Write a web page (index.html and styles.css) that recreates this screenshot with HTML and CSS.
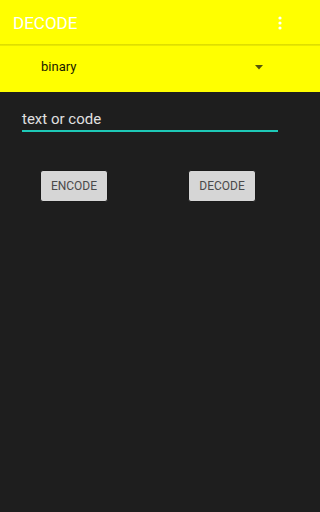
FILE: index.html
```html
<!DOCTYPE html>
<html>
<head>
<meta charset="utf-8">
<link rel="stylesheet" href="styles.css">
</head>
<body>
<div class="appbar">
  <div class="bar-inner">
    <div class="title">DECODE</div>
    <svg class="menu" width="4" height="14" viewBox="0 0 4 14">
      <circle cx="2" cy="2" r="1.6" fill="#fff"/>
      <circle cx="2" cy="7" r="1.6" fill="#fff"/>
      <circle cx="2" cy="12" r="1.6" fill="#fff"/>
    </svg>
  </div>
</div>
<div class="shadow"></div>
<div class="spinner">
  <div class="spinner-inner">
    <span class="spinner-text">binary</span>
    <svg class="caret" width="8" height="5" viewBox="0 0 8 5"><polygon points="0,0 8,0 4,4.5" fill="#55550a"/></svg>
  </div>
</div>
<div class="content">
  <div class="field">
    <div class="field-text">text or code</div>
  </div>
  <div class="buttons">
    <div class="cell"><button class="btn">ENCODE</button></div>
    <div class="cell"><button class="btn">DECODE</button></div>
  </div>
</div>
</body>
</html>
```

FILE: styles.css
```css
html, body {
  margin: 0;
  padding: 0;
  background: #1e1e1e;
}
body {
  min-height: 512px;
  font-family: Roboto, "Liberation Sans", sans-serif;
}
.appbar {
  height: 44px;
  background: #ffff00;
}
.bar-inner {
  width: 299px;
  height: 44px;
  box-sizing: border-box;
  display: flex;
  align-items: center;
  justify-content: space-between;
  padding: 0 17px 0 13px;
}
.title {
  color: #ffffff;
  font-size: 17px;
  margin-top: 1px;
}
.menu {
  display: block;
  margin-top: 1px;
}
.shadow {
  height: 2px;
  background: linear-gradient(#d9d900, #eeee00);
}
.spinner {
  height: 46px;
  background: #ffff00;
}
.spinner-inner {
  width: 299px;
  height: 46px;
  box-sizing: border-box;
  display: flex;
  align-items: center;
  justify-content: space-between;
  padding: 0 36px 0 41px;
}
.spinner-text {
  font-size: 13px;
  color: #1a1a00;
  margin-top: -5px;
}
.caret {
  display: block;
  margin-top: -4px;
}
.content {
  width: 299px;
  box-sizing: border-box;
  padding: 16px 21px 0 22px;
}
.field {
  border-bottom: 2px solid #1ec9b7;
  height: 22px;
}
.field-text {
  font-size: 15px;
  color: #e0e0e0;
  line-height: 18px;
  padding-top: 2px;
}
.buttons {
  display: grid;
  grid-template-columns: 148px 148px;
  margin: 38px 0 0 -22px;
}
.cell {
  display: flex;
  justify-content: center;
}
.btn {
  width: 68px;
  height: 32px;
  background: #d6d6d6;
  border: 1px solid #1a1a1a;
  border-radius: 3px;
  color: #4a4a4a;
  font-family: Roboto, "Liberation Sans", sans-serif;
  font-size: 12px;
  padding: 0;
  margin: 0;
}
```
